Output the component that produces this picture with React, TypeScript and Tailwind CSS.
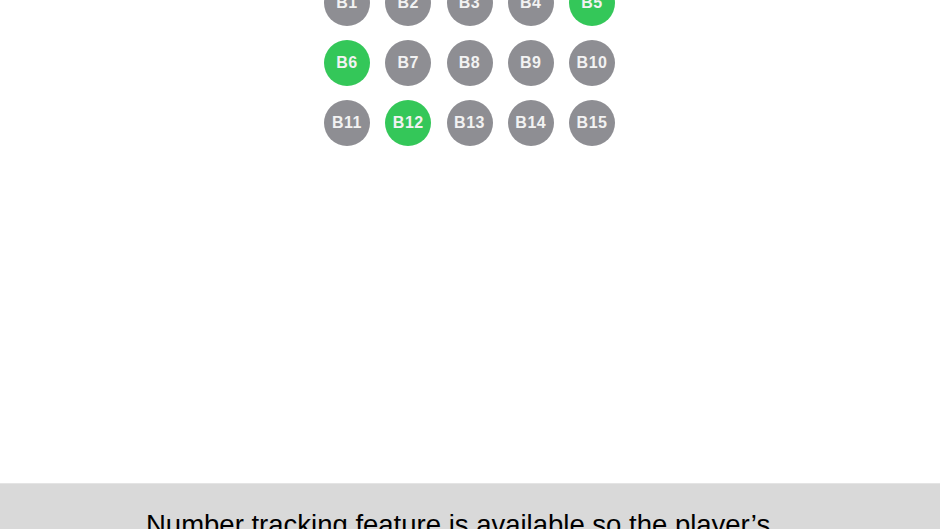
import React from "react";

const green = new Set([5, 6, 12]);

export default function App() {
  const items = Array.from({ length: 15 }, (_, i) => i + 1);
  return (
    <div className="w-[940px] h-[529px] overflow-hidden bg-white flex flex-col" style={{ fontFamily: '"Liberation Sans", Arial, sans-serif' }}>
      <div className="flex-1 flex justify-start pl-[324px]">
        <div className="grid grid-cols-[repeat(5,46px)] gap-x-[15.25px] gap-y-[14px] -mt-[20px] h-fit">
          {items.map((n) => (
            <div
              key={n}
              className={`w-[46px] h-[46px] rounded-full flex items-center justify-center text-[#f2f2f2] font-bold text-[16px] tracking-[0.5px] ${green.has(n) ? "bg-[#34c759]" : "bg-[#8e8e93]"}`}
            >
              B{n}
            </div>
          ))}
        </div>
      </div>
      <div className="h-[46px] bg-[#d9d9d9] border-t border-[#e4e4e4] flex justify-start pl-[146px] pt-[25px]">
        <p className="text-[27.5px] leading-[32px] text-black whitespace-nowrap">Number tracking feature is available so the player’s</p>
      </div>
    </div>
  );
}
